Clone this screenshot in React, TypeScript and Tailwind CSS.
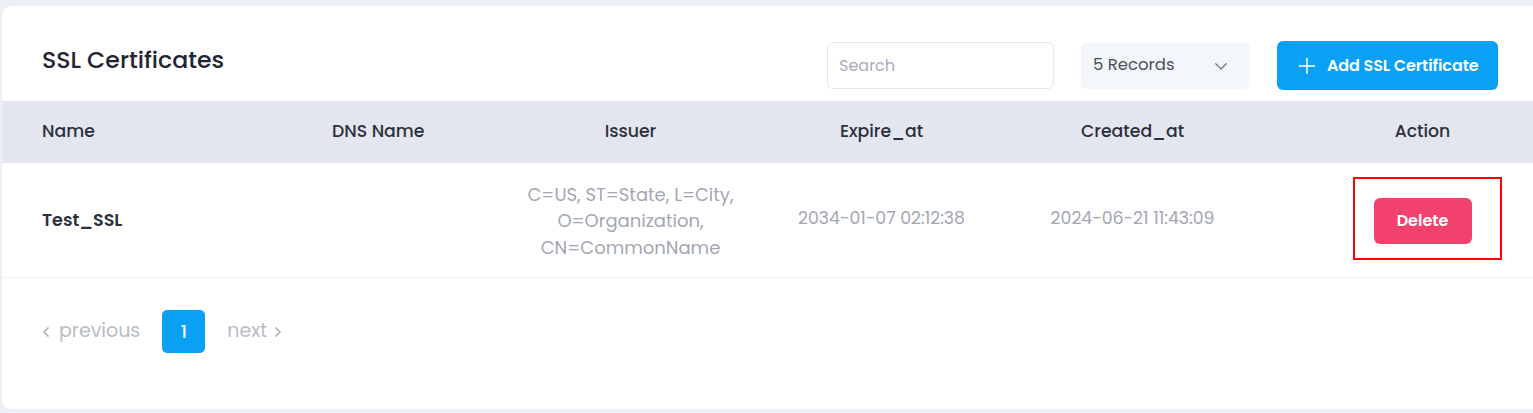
import React from "react";

export default function App() {
  const font = { fontFamily: "Poppins, Inter, 'Noto Sans', sans-serif" };
  return (
    <div className="w-[1533px] h-[413px] bg-[#eceff5] pl-[2px] pt-[6px] overflow-hidden" style={font}>
      <div className="relative h-[403px] bg-white rounded-l-[9px] flex flex-col">
        {/* top bar */}
        <div className="flex items-start pl-[40px] pr-[35px] pt-[35px] h-[95px]">
          <h1 className="mt-[3px] text-[23.6px] leading-[32px] font-medium text-[#1f2533]">SSL Certificates</h1>
          <div className="ml-auto flex items-center gap-[27px]">
            <div className="w-[227px] h-[47px] rounded-[6px] border border-[#e6e8ee] flex items-center px-[11px]">
              <span className="text-[16px] text-[#a8adb9]">Search</span>
            </div>
            <div className="w-[169px] h-[47px] rounded-[6px] bg-[#f3f6fa] flex items-center pl-[12px] pr-[20px]">
              <span className="text-[16.5px] text-[#4a4f5c]">5 Records</span>
              <svg className="ml-auto" width="18" height="18" viewBox="0 0 24 24" fill="none" stroke="#6b7080" strokeWidth="1.6" strokeLinecap="round" strokeLinejoin="round">
                <path d="M5 9l7 7 7-7" />
              </svg>
            </div>
            <div className="w-[221px] h-[49px] rounded-[6px] bg-[#0aa0f4] flex items-center pl-[20px] text-white">
              <svg width="20" height="20" viewBox="0 0 24 24" fill="none" stroke="white" strokeWidth="1.8" strokeLinecap="round">
                <path d="M12 3v18M3 12h18" />
              </svg>
              <span className="ml-[10px] text-[16px] font-semibold tracking-[-0.1px]">Add SSL Certificate</span>
            </div>
          </div>
        </div>

        {/* table header */}
        <div className="grid grid-cols-[252px_251px_251px_251px_251px_1fr] h-[62px] items-center bg-[#e3e6ef] text-[17.3px] font-medium text-[#2b303c]">
          <div className="pl-[40px]">Name</div>
          <div className="pl-[78px]">DNS Name</div>
          <div className="text-center">Issuer</div>
          <div className="text-center">Expire_at</div>
          <div className="text-center">Created_at</div>
          <div className="text-center pl-[54px]">Action</div>
        </div>

        {/* row */}
        <div className="grid grid-cols-[252px_251px_251px_251px_251px_1fr] h-[115px] items-center border-b border-[#f0f2f5] text-[17.3px]">
          <div className="pl-[40px] font-semibold text-[17.5px] text-[#2b303c]">Test_SSL</div>
          <div></div>
          <div className="text-center text-[#a3a7b2] text-[18px] leading-[26.5px] pt-[3px]">
            C=US, ST=State, L=City,<br />O=Organization,<br />CN=CommonName
          </div>
          <div className="text-center text-[#a3a7b2] pb-[3px]">2034-01-07 02:12:38</div>
          <div className="text-center text-[#a3a7b2] pb-[3px]">2024-06-21 11:43:09</div>
          <div className="flex justify-center pl-[54px] pt-[2px]">
            <div className="relative">
              <div className="w-[98px] h-[46px] rounded-[6px] bg-[#f2416d] flex items-center justify-center text-white text-[16px] font-semibold">Delete</div>
              <div className="absolute -left-[21px] -top-[21px] w-[149px] h-[83px] border-2 border-[#ff0000]" />
            </div>
          </div>
        </div>

        {/* pagination */}
        <div className="flex items-center pl-[40px] pt-[32px] text-[19px] text-[#b8bcc6]">
          <span className="flex items-center">
            <svg width="8" height="12" viewBox="0 0 8 12" fill="none" stroke="#b8bcc6" strokeWidth="1.8" strokeLinecap="round" strokeLinejoin="round" className="mr-[9px]">
              <path d="M6 2L2 6l4 4" />
            </svg>
            previous
          </span>
          <div className="ml-[22px] w-[43px] h-[43px] rounded-[5px] bg-[#0aa0f4] flex items-center justify-center text-white font-medium text-[18px]">1</div>
          <span className="ml-[22px] flex items-center">
            next
            <svg width="8" height="12" viewBox="0 0 8 12" fill="none" stroke="#b8bcc6" strokeWidth="1.8" strokeLinecap="round" strokeLinejoin="round" className="ml-[7px]">
              <path d="M2 2l4 4-4 4" />
            </svg>
          </span>
        </div>
      </div>
    </div>
  );
}
